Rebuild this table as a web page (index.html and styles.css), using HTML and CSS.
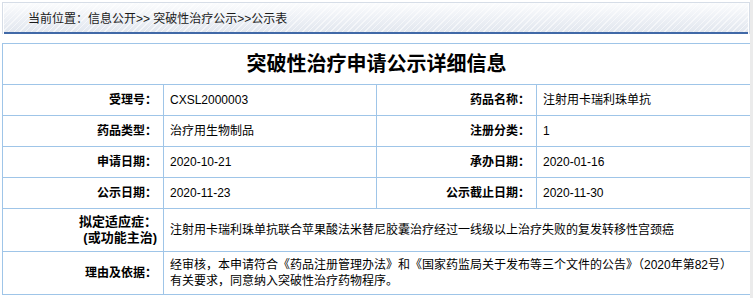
FILE: index.html
```html
<!DOCTYPE html>
<html lang="zh-CN">
<head>
<meta charset="utf-8">
<title>突破性治疗申请公示详细信息</title>
<link rel="stylesheet" href="styles.css">
</head>
<body>
<div class="crumb">
  <div class="crumb-bar">当前位置：信息公开&gt;&gt; 突破性治疗公示&gt;&gt;公示表</div>
</div>
<table class="detail">
  <colgroup>
    <col class="c-label"><col class="c-value"><col class="c-label2"><col class="c-value2">
  </colgroup>
  <tr class="r-title"><td colspan="4" class="title">突破性治疗申请公示详细信息</td></tr>
  <tr class="r-row">
    <td class="label">受理号：</td><td class="value">CXSL2000003</td>
    <td class="label">药品名称：</td><td class="value">注射用卡瑞利珠单抗</td>
  </tr>
  <tr class="r-row">
    <td class="label">药品类型：</td><td class="value">治疗用生物制品</td>
    <td class="label">注册分类：</td><td class="value">1</td>
  </tr>
  <tr class="r-row">
    <td class="label">申请日期：</td><td class="value">2020-10-21</td>
    <td class="label">承办日期：</td><td class="value">2020-01-16</td>
  </tr>
  <tr class="r-row">
    <td class="label">公示日期：</td><td class="value">2020-11-23</td>
    <td class="label">公示截止日期：</td><td class="value">2020-11-30</td>
  </tr>
  <tr class="r-tall">
    <td class="label label-two">拟定适应症：<br>(或功能主治)</td>
    <td class="value" colspan="3">注射用卡瑞利珠单抗联合苹果酸法米替尼胶囊治疗经过一线级以上治疗失败的复发转移性宫颈癌</td>
  </tr>
  <tr class="r-tall">
    <td class="label">理由及依据：</td>
    <td class="value text" colspan="3">经审核，本申请符合《药品注册管理办法》和《国家药监局关于发布等三个文件的公告》（2020年第82号）<br>有关要求，同意纳入突破性治疗药物程序。</td>
  </tr>
</table>
</body>
</html>
```
FILE: styles.css
```css
html {
  background: #ffffff;
}
body {
  margin: 0;
  padding: 2px 0 0 2px;
  width: 753px;
  min-height: 298px;
  box-sizing: border-box;
  border-right: 3px solid #ebebeb;
  font-family: "Liberation Sans", "Noto Sans CJK SC", sans-serif;
  font-size: 12px;
  color: #000;
}
.crumb {
  width: 748px;
  box-sizing: border-box;
  border: 1px solid #d6dde7;
  border-bottom: 0;
}
.crumb-bar {
  height: 29px;
  margin: 0 1px;
  border-bottom: 2px solid #4169a7;
  background:
    repeating-linear-gradient(135deg, rgba(255,255,255,0) 0px, rgba(255,255,255,0) 3px, rgba(255,255,255,0.55) 3px, rgba(255,255,255,0.55) 4px),
    linear-gradient(to bottom, #fbfcfd 0%, #eef1f6 50%, #e2e7ef 100%);
  display: flex;
  align-items: center;
  padding-left: 24px;
  font-size: 12px;
  color: #1a1a1a;
}
.detail {
  margin-top: 9px;
  width: 748px;
  border-collapse: collapse;
  table-layout: fixed;
  border: 1px solid #9fc5e8;
}
.c-label { width: 161px; }
.c-value { width: 213px; }
.c-label2 { width: 160px; }
.c-value2 { width: 214px; }
.detail td {
  border: 1px solid #9fc5e8;
  padding: 0 6px;
  vertical-align: middle;
  line-height: 16px;
}
.r-title td { height: 40px; }
.r-row td { height: 30px; }
.r-tall td { height: 42px; }
.title {
  text-align: center;
  font-size: 20px;
  font-weight: bold;
  line-height: 24px;
}
.label {
  text-align: right;
  font-weight: bold;
}
.label-two {
  font-size: 13px;
}
.value {
  text-align: left;
}
```
